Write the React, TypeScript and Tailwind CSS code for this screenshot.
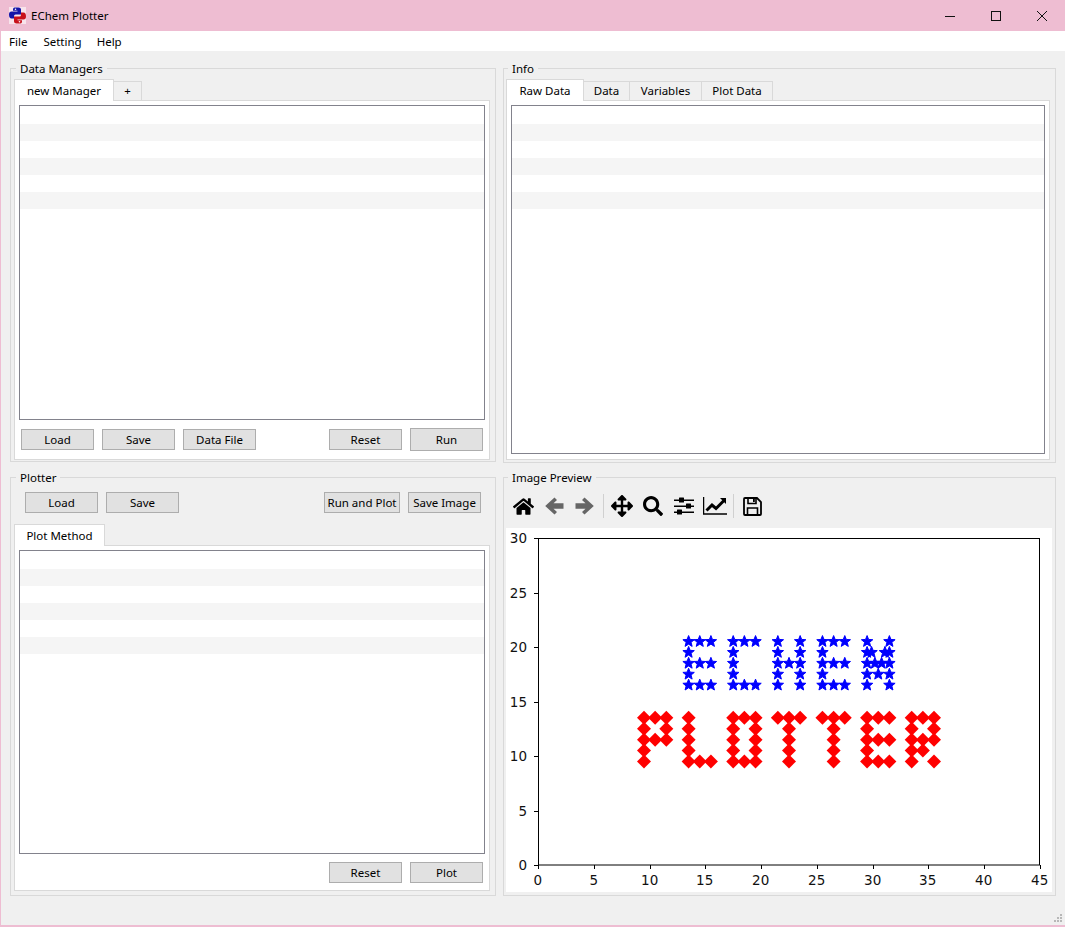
import React from "react";
import { FaHome, FaArrowsAlt, FaSearch } from "react-icons/fa";

const font = { fontFamily: '"Noto Sans", "DejaVu Sans", sans-serif' };

function Btn({ label, w = "w-[73px]", h = "h-[21px]" }: { label: string; w?: string; h?: string }) {
  return (
    <div className={`${w} ${h} flex items-center justify-center border border-[#adadad] bg-[#e1e1e1] text-[11.5px] leading-none text-black shrink-0`}>
      {label}
    </div>
  );
}

function ListBox({ className }: { className: string }) {
  return (
    <div className={`border border-[#82828c] bg-white pt-px ${className}`}>
      {[0, 1, 2, 3, 4, 5].map((i) => (
        <div key={i} className={`h-[17px] ${i % 2 === 1 ? "bg-[#f5f5f5]" : "bg-white"}`} />
      ))}
    </div>
  );
}

function Group({ title, className, labelLeft = "left-[5px]", children }: { title: string; className: string; labelLeft?: string; children: React.ReactNode }) {
  return (
    <div className={`relative border border-[#d9d9d9] ${className}`}>
      <span className={`absolute ${labelLeft} top-[-8px] bg-[#f0f0f0] px-[4px] text-[11.5px] leading-[16px] text-black`}>{title}</span>
      {children}
    </div>
  );
}

function Tab({ label, active, w }: { label: string; active?: boolean; w: string }) {
  return active ? (
    <div className={`${w} h-[22px] -mb-px z-10 flex items-center justify-center border border-b-0 border-[#d9d9d9] bg-white text-[11.5px] text-black`}>{label}</div>
  ) : (
    <div className={`${w} h-[20px] -ml-px -mb-px flex items-center justify-center border border-[#d9d9d9] bg-[#f0f0f0] text-[11.5px] text-black`}>{label}</div>
  );
}

const X = (v: number) => 538 + v * (502 / 45);
const Y = (v: number) => 865 - v * 10.9;

const stars: [number, number][] = [];
const diamonds: [number, number][] = [];
const addGrid = (out: [number, number][], x0: number, y0: number, rows: string[]) => {
  rows.forEach((r, j) => {
    r.split("").forEach((c, i) => {
      if (c === "#") out.push([x0 + i, y0 - j]);
    });
  });
};
addGrid(stars, 13.5, 20.5, ["###", "#..", "###", "#..", "###"]);
addGrid(stars, 17.5, 20.5, ["###", "#..", "#..", "#..", "###"]);
addGrid(stars, 21.5, 20.5, ["#.#", "#.#", "###", "#.#", "#.#"]);
addGrid(stars, 25.5, 20.5, ["###", "#..", "###", "#..", "###"]);
stars.push(
  [29.5, 20.5], [31.5, 20.5],
  [29.5, 19.5], [29.9, 19.5], [31.1, 19.5], [31.5, 19.5],
  [29.5, 18.5], [30.2, 18.5], [30.8, 18.5], [31.5, 18.5],
  [29.5, 17.5], [30.5, 17.5], [31.5, 17.5],
  [29.5, 16.5], [31.5, 16.5]
);
addGrid(diamonds, 9.5, 13.5, ["###", "#.#", "###", "#..", "#.."]);
addGrid(diamonds, 13.5, 13.5, ["#..", "#..", "#..", "#..", "###"]);
addGrid(diamonds, 17.5, 13.5, ["###", "#.#", "#.#", "#.#", "###"]);
addGrid(diamonds, 21.5, 13.5, ["###", ".#.", ".#.", ".#.", ".#."]);
addGrid(diamonds, 25.5, 13.5, ["###", ".#.", ".#.", ".#.", ".#."]);
addGrid(diamonds, 29.5, 13.5, ["###", "#..", "###", "#..", "###"]);
addGrid(diamonds, 33.5, 13.5, ["###", "#.#", "###", "##.", "#.#"]);

const starPts = Array.from({ length: 10 }, (_, i) => {
  const r = i % 2 === 0 ? 6 : 2.6;
  const a = -Math.PI / 2 + (i * Math.PI) / 5;
  return `${(r * Math.cos(a)).toFixed(2)},${(r * Math.sin(a)).toFixed(2)}`;
}).join(" ");

function Chart() {
  const ox = 506, oy = 528;
  return (
    <svg width="546" height="364" viewBox={`${ox} ${oy} 546 364`} className="block">
      <rect x="538.5" y="538.5" width="501" height="326.5" fill="white" stroke="black" strokeWidth="1" />
      {[0, 5, 10, 15, 20, 25, 30, 35, 40, 45].map((v) => {
        const x = Math.round(X(v)) + 0.5;
        return (
          <g key={v}>
            <line x1={x} x2={x} y1="865" y2="869" stroke="black" />
            <text x={x - 0.8} y="885" textAnchor="middle" fontSize="13.5" fontFamily='"DejaVu Sans", sans-serif' fill="#111">{v}</text>
          </g>
        );
      })}
      {[0, 5, 10, 15, 20, 25, 30].map((v) => {
        const y = Math.round(Y(v)) + 0.5;
        return (
          <g key={v}>
            <line x1="534" x2="538" y1={y} y2={y} stroke="black" />
            <text x="527" y={y + 4} textAnchor="end" fontSize="13.5" fontFamily='"DejaVu Sans", sans-serif' fill="#111">{v}</text>
          </g>
        );
      })}
      {stars.map(([a, b], i) => (
        <polygon key={i} points={starPts} fill="#0000ff" stroke="#0000ff" strokeWidth="1" strokeLinejoin="miter" transform={`translate(${X(a)} ${Y(b)})`} />
      ))}
      {diamonds.map(([a, b], i) => (
        <polygon key={i} points="0,-7 7,0 0,7 -7,0" fill="#ff0000" transform={`translate(${X(a)} ${Y(b)})`} />
      ))}
    </svg>
  );
}

function PyLogo() {
  return (
    <svg width="17" height="17" viewBox="0 0 17 17">
      <rect width="17" height="17" fill="#f7e4ec" />
      <path d="M5.5 0.5 h4 q2.5 0 2.5 2 V7.5 H6.5 Q5 7.5 5 9 V11.5 H2.5 Q0 11.5 0 7.5 Q0 4.5 2.5 4.5 H8.5 V3.8 H4 V2.5 Q4 0.5 5.5 0.5 Z" fill="#1414a8" />
      <path d="M11.5 16.5 h-4 q-2.5 0 -2.5 -2 V9.5 h5.5 q1.5 0 1.5 -1.5 V5.5 h2.5 q2.5 0 2.5 4 q0 3 -2.5 3 H8.5 v.7 H13 V14.5 Q13 16.5 11.5 16.5 Z" fill="#c8101c" />
      <circle cx="6.5" cy="2.3" r="0.8" fill="white" />
      <circle cx="10.5" cy="14.7" r="0.8" fill="white" />
    </svg>
  );
}

function ArrowIcon({ flip, className }: { flip?: boolean; className: string }) {
  return (
    <svg width="19" height="18" viewBox="0 0 19 18" className={className}>
      <path
        d={flip ? "M9.5 0.5 L18.8 9 L9.5 17.5 L7 15 L10.5 11.7 H0.5 V6.3 H10.5 L7 3 Z" : "M9.5 0.5 L0.2 9 L9.5 17.5 L12 15 L8.5 11.7 H18.5 V6.3 H8.5 L12 3 Z"}
        fill="#666666"
      />
    </svg>
  );
}

function SlidersIcon({ className }: { className: string }) {
  return (
    <svg width="20" height="18" viewBox="0 0 20 18" className={className}>
      <g fill="#000">
        <rect x="0" y="2.5" width="20" height="1.5" />
        <rect x="5" y="0.5" width="5" height="5" rx="0.5" />
        <rect x="0" y="8.5" width="20" height="1.5" />
        <rect x="12" y="6.5" width="5" height="5" rx="0.5" />
        <rect x="0" y="14.5" width="20" height="1.5" />
        <rect x="3" y="12.5" width="5" height="5" rx="0.5" />
      </g>
    </svg>
  );
}

function ChartIcon({ className }: { className: string }) {
  return (
    <svg width="24" height="18" viewBox="0 0 24 18" className={className}>
      <path d="M0.5 0 V17 H24" fill="none" stroke="#000" strokeWidth="1.5" />
      <path d="M3.5 13.5 L9 8 L13 11.5 L21 3.5" fill="none" stroke="#000" strokeWidth="3" />
      <path d="M17 1 H23 V7 Z" fill="#000" />
    </svg>
  );
}

function SaveIcon({ className }: { className: string }) {
  return (
    <svg width="19" height="19" viewBox="0 0 19 19" className={className}>
      <path d="M1 2 Q1 1 2 1 H14 L18 5 V17 Q18 18 17 18 H2 Q1 18 1 17 Z" fill="none" stroke="#000" strokeWidth="1.8" />
      <path d="M5 1 V6.5 H13 V1" fill="none" stroke="#000" strokeWidth="1.6" />
      <rect x="10" y="2" width="1.8" height="3" fill="#000" />
      <path d="M4.5 18 V11 H14.5 V18" fill="none" stroke="#000" strokeWidth="1.6" />
    </svg>
  );
}

export default function App() {
  return (
    <div className="w-[1065px] h-[927px] flex flex-col bg-[#f0f0f0] overflow-hidden border-l border-b-2 border-[#eebdd2] text-black" style={font}>
      <div className="h-[31px] shrink-0 flex items-center bg-[#eebdd2] pl-[8px]">
        <PyLogo />
        <span className="ml-[5px] text-[11.5px] text-black">EChem Plotter</span>
        <div className="ml-auto flex items-center">
          <svg width="46" height="30" viewBox="0 0 46 30"><path d="M18 15.5h10" stroke="#111" strokeWidth="1" /></svg>
          <svg width="46" height="30" viewBox="0 0 46 30"><rect x="18.5" y="10.5" width="9" height="9" fill="none" stroke="#111" strokeWidth="1" /></svg>
          <svg width="46" height="30" viewBox="0 0 46 30"><path d="M18 10l10 10M28 10l-10 10" stroke="#111" strokeWidth="1" /></svg>
        </div>
      </div>
      <div className="h-[20px] shrink-0 flex items-center bg-white pl-[8px] pt-px text-[11.5px] text-black">
        <span>File</span>
        <span className="ml-[16px]">Setting</span>
        <span className="ml-[15px]">Help</span>
      </div>
      <div className="flex pl-[9px] pt-[17px] gap-[7px]">
        <div className="flex flex-col w-[486px] gap-[15px]">
          <Group title="Data Managers" className="h-[394px] pt-[10px] pl-[3px] pr-[5px]">
            <div className="flex items-end">
              <Tab label="new Manager" active w="w-[100px]" />
              <Tab label="+" w="w-[29px]" />
            </div>
            <div className="border border-[#d9d9d9] bg-white h-[360px] p-[4px] pb-0">
              <ListBox className="h-[315px]" />
              <div className="flex items-center mt-[8px] px-[2px]">
                <div className="flex gap-[8px]">
                  <Btn label="Load" /><Btn label="Save" /><Btn label="Data File" />
                </div>
                <div className="ml-auto flex items-center gap-[8px]">
                  <Btn label="Reset" /><Btn label="Run" h="h-[23px]" />
                </div>
              </div>
            </div>
          </Group>
          <Group title="Plotter" className="h-[419px] pt-[14px] pl-[3px] pr-[5px]">
            <div className="flex pl-[11px] pr-[9px]">
              <div className="flex gap-[8px]"><Btn label="Load" /><Btn label="Save" /></div>
              <div className="ml-auto flex gap-[8px]">
                <Btn label="Run and Plot" w="w-[76px]" /><Btn label="Save Image" />
              </div>
            </div>
            <div className="flex items-end mt-[11px]">
              <Tab label="Plot Method" active w="w-[91px]" />
            </div>
            <div className="border border-[#d9d9d9] bg-white h-[346px] p-[4px] pb-0">
              <ListBox className="h-[304px]" />
              <div className="flex justify-end gap-[8px] mt-[8px] pr-[2px]">
                <Btn label="Reset" /><Btn label="Plot" />
              </div>
            </div>
          </Group>
        </div>
        <div className="flex flex-col w-[553px] gap-[14px]">
          <Group title="Info" labelLeft="left-[4px]" className="h-[395px] pt-[10px] pl-[2px] pr-[5px]">
            <div className="flex items-end">
              <Tab label="Raw Data" active w="w-[78px]" />
              <Tab label="Data" w="w-[47px]" />
              <Tab label="Variables" w="w-[73px]" />
              <Tab label="Plot Data" w="w-[72px]" />
            </div>
            <div className="border border-[#d9d9d9] bg-white h-[360px] p-[4px]">
              <ListBox className="h-[349px]" />
            </div>
          </Group>
          <Group title="Image Preview" labelLeft="left-[4px]" className="h-[419px] pl-[2px] pr-[3px] pt-[11px]">
            <div className="h-[34px] mb-[5px] flex items-center pl-[7px] text-black">
              <FaHome size={21} />
              <ArrowIcon className="ml-[11px]" />
              <ArrowIcon flip className="ml-[11px]" />
              <div className="w-px h-[24px] bg-[#d0d0d0] ml-[9px]" />
              <FaArrowsAlt size={22} className="ml-[7px]" />
              <FaSearch size={20} className="ml-[10px]" />
              <SlidersIcon className="ml-[11px]" />
              <ChartIcon className="ml-[9px]" />
              <div className="w-px h-[24px] bg-[#d0d0d0] ml-[6px]" />
              <SaveIcon className="ml-[9px]" />
            </div>
            <div className="bg-white w-[546px] h-[364px]">
              <Chart />
            </div>
          </Group>
        </div>
      </div>
      <div className="mt-auto flex justify-end pr-[2px] pb-[2px]">
        <svg width="10" height="10" viewBox="0 0 10 10" fill="#b8b8b8">
          <rect x="7" y="1" width="2" height="2" /><rect x="4" y="4" width="2" height="2" /><rect x="7" y="4" width="2" height="2" />
          <rect x="1" y="7" width="2" height="2" /><rect x="4" y="7" width="2" height="2" /><rect x="7" y="7" width="2" height="2" />
        </svg>
      </div>
    </div>
  );
}
